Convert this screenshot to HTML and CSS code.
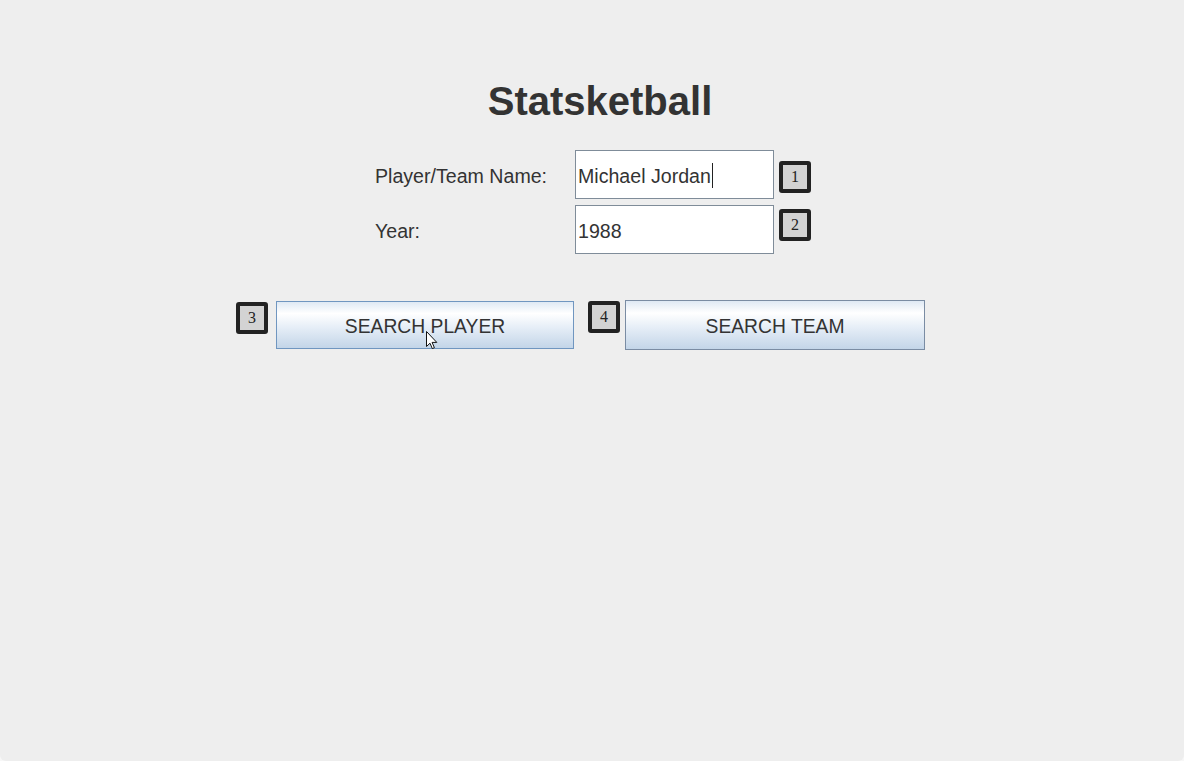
FILE: index.html
```html
<!DOCTYPE html>
<html>
<head>
<meta charset="utf-8">
<title>Statsketball</title>
<link rel="stylesheet" href="styles.css">
</head>
<body>
<div class="window">
  <h1 class="title">Statsketball</h1>
  <div class="form">
    <label class="label" for="name">Player/Team Name:</label>
    <div class="field"><span class="value">Michael Jordan</span><span class="caret"></span></div>
    <div class="badge badge-1">1</div>
    <label class="label" for="year">Year:</label>
    <div class="field"><span class="value">1988</span></div>
    <div class="badge badge-2">2</div>
  </div>
  <div class="actions">
    <div class="badge badge-3">3</div>
    <button class="btn btn-focus">SEARCH PLAYER
      <svg class="cursor" width="12" height="19" viewBox="0 0 12 19"><path d="M0.5 0.5 L0.5 15.5 L4 12.2 L6.3 17.6 L8.4 16.7 L6.1 11.4 L10.8 11.4 Z" fill="#fff" stroke="#111" stroke-width="1" stroke-linejoin="round"/></svg>
    </button>
    <div class="badge badge-4">4</div>
    <button class="btn">SEARCH TEAM</button>
  </div>
</div>
</body>
</html>
```
FILE: styles.css
```css
html, body {
  margin: 0;
  padding: 0;
  background: #f7f7f7;
}
.window {
  width: 1184px;
  height: 761px;
  background: #eeeeee;
  border-radius: 0 0 6px 6px;
  font-family: "Liberation Sans", Arial, sans-serif;
  color: #333333;
  box-sizing: border-box;
  padding-top: 77px;
  overflow: hidden;
}
.title {
  margin: 0;
  padding-left: 16px;
  text-align: center;
  font-size: 40px;
  line-height: 48px;
  font-weight: bold;
  color: #333333;
}
.form {
  margin-top: 25px;
  margin-left: 375px;
  display: grid;
  grid-template-columns: 195px 199px 32px;
  column-gap: 5px;
  row-gap: 6px;
  grid-auto-rows: 49px;
  align-items: center;
}
.label {
  font-size: 19.6px;
  line-height: 24px;
  padding-top: 2px;
}
.field {
  height: 49px;
  box-sizing: border-box;
  border: 1px solid #7f8c99;
  background: #ffffff;
  display: flex;
  align-items: center;
  padding: 3px 0 0 2px;
  font-size: 19.6px;
}
.caret {
  display: inline-block;
  width: 1px;
  height: 25px;
  background: #222;
  margin-left: 1px;
  margin-top: -2px;
}
.badge {
  width: 32px;
  height: 32px;
  box-sizing: border-box;
  border: 4px solid #222222;
  border-radius: 3px;
  background: #d3d3d3;
  font-family: "Liberation Serif", "Times New Roman", serif;
  font-size: 16px;
  line-height: 24px;
  text-align: center;
  color: #222;
}
.badge-1 { align-self: start; margin-top: 11px; }
.badge-2 { align-self: start; margin-top: 4px; }
.actions {
  margin-top: 46px;
  margin-left: 236px;
  display: flex;
  align-items: flex-start;
}
.badge-3 { margin-top: 2px; margin-right: 8px; }
.badge-4 { margin-top: 1px; margin-left: 14px; margin-right: 5px; }
.btn {
  position: relative;
  width: 300px;
  height: 50px;
  box-sizing: border-box;
  border: 1px solid #7a8ca3;
  background: linear-gradient(to bottom, #dfe9f4 0%, #ffffff 25%, #e6eef7 55%, #c3d5e8 100%);
  font-family: "Liberation Sans", Arial, sans-serif;
  font-size: 19.3px;
  color: #333333;
  padding: 3px 0 0 0;
  margin: 0;
  cursor: default;
}
.btn-focus {
  width: 298px;
  height: 48px;
  margin-top: 1px;
  border-color: #7096c0;
}
.cursor {
  position: absolute;
  left: 149px;
  top: 29px;
}
```
